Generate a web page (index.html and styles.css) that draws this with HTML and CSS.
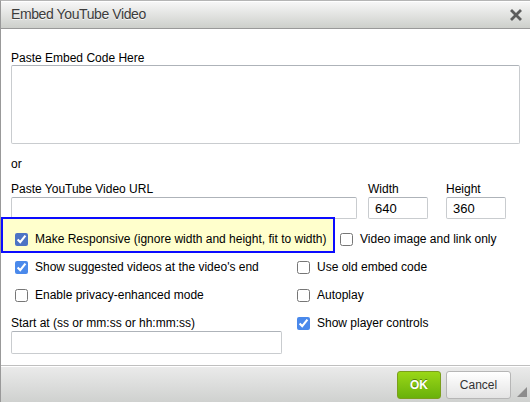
FILE: index.html
```html
<!DOCTYPE html>
<html lang="en">
<head>
  <meta charset="UTF-8" />
  <title>Embed YouTube Video</title>
  <link rel="stylesheet" href="styles.css">
</head>
<body>
  <div class="dialog">
    <div class="dialog-title">
      <span>Embed YouTube Video</span>
      <a class="close" title="Close">
        <svg width="12" height="12" viewBox="0 0 12 12">
          <path d="M2 2 L10 10 M10 2 L2 10" stroke="#5c5c5c" stroke-width="2.8" stroke-linecap="square" />
        </svg>
      </a>
    </div>

    <div class="dialog-body">
      <label class="field-label" for="embedCode">Paste Embed Code Here</label>
      <textarea id="embedCode" class="text-input embed-code"></textarea>

      <p class="or">or</p>

      <div class="url-row">
        <div class="url-field">
          <label class="field-label" for="videoUrl">Paste YouTube Video URL</label>
          <input type="text" id="videoUrl" class="text-input" />
        </div>
        <div class="size-field width-field">
          <label class="field-label" for="videoWidth">Width</label>
          <input type="text" id="videoWidth" class="text-input" value="640" />
        </div>
        <div class="size-field height-field">
          <label class="field-label" for="videoHeight">Height</label>
          <input type="text" id="videoHeight" class="text-input" value="360" />
        </div>
      </div>

      <div class="option-row first-row">
        <label class="option highlight"><input type="checkbox" checked /> Make Responsive (ignore width and height, fit to width)</label>
        <label class="option image-only"><input type="checkbox" /> Video image and link only</label>
      </div>

      <div class="option-row second-row">
        <div class="col-left">
          <label class="option"><input type="checkbox" checked /> Show suggested videos at the video's end</label>
        </div>
        <label class="option"><input type="checkbox" /> Use old embed code</label>
      </div>

      <div class="option-row">
        <div class="col-left">
          <label class="option"><input type="checkbox" /> Enable privacy-enhanced mode</label>
        </div>
        <label class="option"><input type="checkbox" /> Autoplay</label>
      </div>

      <div class="option-row">
        <div class="col-left">
          <label class="field-label" for="startAt">Start at (ss or mm:ss or hh:mm:ss)</label>
          <input type="text" id="startAt" class="text-input start-at" />
        </div>
        <label class="option"><input type="checkbox" checked /> Show player controls</label>
      </div>
    </div>

    <div class="dialog-footer">
      <button type="button" class="btn btn-ok">OK</button>
      <button type="button" class="btn btn-cancel">Cancel</button>
      <span class="resize-grip"></span>
    </div>
  </div>
</body>
</html>
```

FILE: styles.css
```css
body {
  margin: 0;
  font-family: "Liberation Sans", Arial, sans-serif;
  font-size: 12px;
  color: #000;
  background: #fff;
  overflow: hidden;
}
.dialog {
  height: 401px;
  display: flex;
  flex-direction: column;
  border-left: 1px solid #999;
  border-top: 1px solid #b5b5b5;
}
.dialog-title {
  height: 27px;
  line-height: 27px;
  padding: 0 8px 0 10px;
  display: flex;
  justify-content: space-between;
  align-items: center;
  background: linear-gradient(#f8f8f8, #cdcfcb);
  border-bottom: 1px solid #999;
  box-shadow: inset 0 1px 0 #fff;
  color: #3c3c3c;
  font-size: 14px;
  letter-spacing: -0.4px;
  text-shadow: 0 1px 0 rgba(255, 255, 255, 0.75);
}
.close {
  display: flex;
  cursor: pointer;
}
.dialog-body {
  flex: 1;
  padding: 22px 0 0 10px;
}
.field-label {
  display: block;
  line-height: 14px;
}
.text-input {
  display: block;
  box-sizing: border-box;
  margin: 0;
  padding: 0 6px;
  height: 22px;
  border: 1px solid #c9cccf;
  border-top-color: #aeb3b9;
  border-radius: 2px;
  background: #fff;
  font-family: inherit;
  font-size: 13px;
  color: #000;
}
.embed-code {
  width: 509px;
  height: 79px;
  resize: none;
}
.or {
  margin: 13px 0 0;
  line-height: 14px;
}
.url-row {
  display: flex;
  margin-top: 11px;
}
.url-row .text-input {
  margin-top: 1px;
}
.url-field .text-input {
  width: 346px;
}
.width-field {
  margin-left: 11px;
}
.height-field {
  margin-left: 18px;
}
.size-field .text-input {
  width: 60px;
}
.option-row {
  display: flex;
  align-items: flex-start;
  margin-top: 14px;
}
.first-row {
  margin-top: -2px;
}
.second-row {
  margin-top: 7px;
}
.col-left {
  width: 282px;
}
.option {
  display: flex;
  align-items: center;
  line-height: 14px;
  white-space: nowrap;
}
.option input {
  width: 13px;
  height: 13px;
  margin: 0 7px 0 4px;
  accent-color: #4a89eb;
}
.highlight {
  width: 334px;
  box-sizing: border-box;
  margin-left: -10px;
  padding: 13px 0 5px 8px;
  border: 2px solid #0c0cff;
  background: #ffffcc;
}
.highlight input {
  accent-color: #4d74c4;
}
.image-only {
  margin: 15px 0 0 1px;
}
.start-at {
  width: 271px;
  height: 23px;
  margin-top: 1px;
}
.dialog-footer {
  position: relative;
  height: 37px;
  display: flex;
  justify-content: flex-end;
  align-items: flex-start;
  gap: 5px;
  padding: 5px 19px 0 0;
  box-sizing: border-box;
  border-top: 1px solid #bfbfbf;
  background: linear-gradient(#ebebeb, #cfd1cf);
  box-shadow: inset 0 1px 0 #fff;
}
.btn {
  height: 28px;
  box-sizing: border-box;
  padding: 0;
  border-radius: 3px;
  font-family: inherit;
  font-size: 12px;
  cursor: pointer;
}
.btn-ok {
  width: 44px;
  border: 1px solid #7b9f1c;
  background: linear-gradient(#9ad717, #69b10b);
  color: #fff;
  font-weight: bold;
  text-shadow: 0 -1px 0 #55830c;
}
.btn-cancel {
  width: 65px;
  border: 1px solid #b6b6b6;
  background: linear-gradient(#fff, #e4e4e4);
  color: #333;
}
.resize-grip {
  position: absolute;
  right: 3px;
  bottom: 5px;
  width: 0;
  height: 0;
  border-left: 10px solid transparent;
  border-bottom: 10px solid #8c8c8c;
}
```
